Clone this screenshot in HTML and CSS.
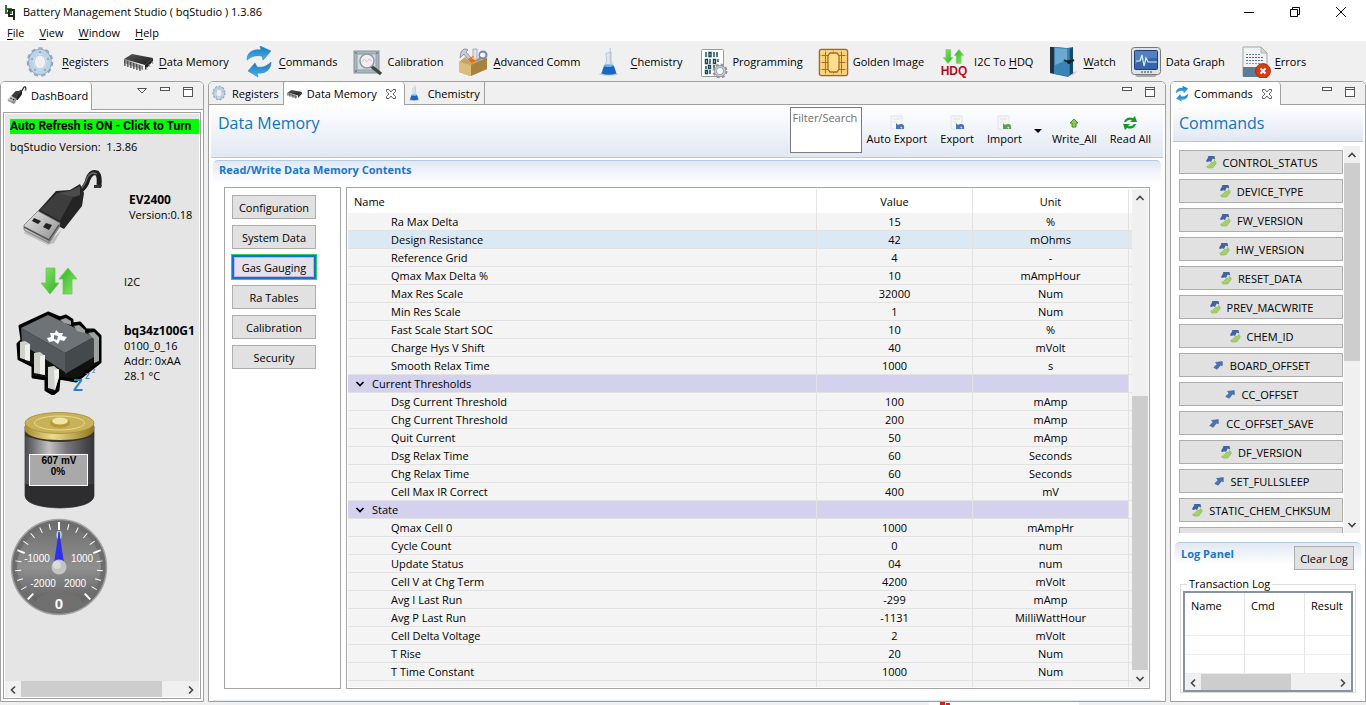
FILE: index.html
```html
<!DOCTYPE html>
<html lang="en">
<head>
    <meta charset="UTF-8">
    <meta name="viewport" content="width=device-width, initial-scale=1.0">
    <title>Battery Management Studio ( bqStudio ) 1.3.86</title>
    <link rel="stylesheet" href="styles.css">
</head>
<body>

    <!-- Shared icons -->
    <svg class="sprite" aria-hidden="true">
        <defs>
            <linearGradient id="gBlue" x1="0" y1="0" x2="0" y2="1"><stop offset="0" stop-color="#1b75b8"/><stop offset="1" stop-color="#45b4f2"/></linearGradient>
            <linearGradient id="gGreen" x1="0" y1="0" x2="1" y2="1"><stop offset="0" stop-color="#8ee86c"/><stop offset="1" stop-color="#2fae22"/></linearGradient>
            <linearGradient id="gBlack" x1="0" y1="0" x2="1" y2="1"><stop offset="0" stop-color="#5a5a5a"/><stop offset="1" stop-color="#1a1a1a"/></linearGradient>
            <linearGradient id="gMetal" x1="0" y1="0" x2="1" y2="1"><stop offset="0" stop-color="#e8e8e8"/><stop offset="1" stop-color="#8a8a8a"/></linearGradient>
        </defs>
        <symbol id="gear" viewBox="0 0 32 32">
            <ellipse cx="14" cy="16" rx="11" ry="12.500" fill="none" stroke="#93a9bd" stroke-width="4.500" stroke-dasharray="3.800 2.900"/>
            <ellipse cx="14" cy="16" rx="8.500" ry="10" fill="none" stroke="#8ba4bc" stroke-width="6.500"/>
            <ellipse cx="14" cy="16" rx="8.500" ry="10" fill="none" stroke="#bcd2e6" stroke-width="5"/>
            <ellipse cx="14" cy="16" rx="6" ry="7.500" fill="none" stroke="#dbe8f3" stroke-width="1"/>
            <g fill="#8ba4bc"><circle cx="14" cy="6" r="1"/><circle cx="22" cy="13" r="1"/><circle cx="6" cy="13" r="1"/><circle cx="9" cy="24" r="1"/><circle cx="19" cy="24" r="1"/></g>
        </symbol>
        <symbol id="chip" viewBox="0 0 32 32">
            <path d="M1 13L20 20V24L1 17Z" fill="#777"/>
            <path d="M2 14v6M5 15v6M8 16v6M11 17v6M14 18v6M17 19v6" stroke="#444" stroke-width="1.500"/>
            <path d="M3 14v6M6 15v6M9 16v6M12 17v6M15 18v6M18 19v6" stroke="#ccc" stroke-width="0.800"/>
            <path d="M9 8L30 12L22 19L1 13Z" fill="url(#gBlack)"/>
            <path d="M30 12V15L22 24V19Z" fill="#222"/>
            <path d="M23 21l1 3M26 18l1 3M29 15l1 3" stroke="#999" stroke-width="1"/>
        </symbol>
        <symbol id="sync" viewBox="0 0 32 32">
            <path d="M4 14C4 6 10 3 18 4L17 0L28 5L20 14L19 10C13 9 9 10 4 14Z" fill="url(#gBlue)" stroke="#2a83c0" stroke-width="0.600"/>
            <path d="M28 16C28 24 22 28 14 27L15 31L5 25L12 17L14 21C20 22 24 20 28 16Z" fill="url(#gBlue)" stroke="#2a83c0" stroke-width="0.600"/>
        </symbol>
        <symbol id="flask" viewBox="0 0 32 32">
            <ellipse cx="12" cy="30" rx="11" ry="1.500" fill="#c3cdd8"/>
            <path d="M9 6L15 5V15L21 29Q12 32 4 29L10 15Z" fill="#dfe8f0" stroke="#9fb0c0" stroke-width="0.700"/>
            <path d="M7 20Q12 22 18 20L21 29Q12 32 4 29Z" fill="#1767c8"/>
            <ellipse cx="12" cy="20" rx="5.500" ry="1.500" fill="#6bb4f0"/>
            <path d="M14 0V20" stroke="#b5bec8" stroke-width="1"/>
        </symbol>
        <symbol id="usb" viewBox="0 0 84 80">
            <path d="M8 60L32 72L42 62L34 76L28 78L4 66Z" fill="#bdbdbd"/>
            <path d="M60 24Q66 20 68 12Q71 4 77 6Q80 9 79 18" fill="none" stroke="#1e1e1e" stroke-width="5"/>
            <path d="M60 23Q65 18 67 11Q71 4 77 7" fill="none" stroke="#666" stroke-width="1.500"/>
            <path d="M74 18h8l-1 3h-7Z" fill="#333"/>
            <path d="M18 44L36 24L50 23L60 17L64 26L62 39L44 62L40 60Z" fill="#242424"/>
            <path d="M20 43L37 26L54 28L40 54Z" fill="#3d3d3d"/>
            <path d="M37 26L50 24L60 19L60 28L54 30Z" fill="#4b4b4b"/>
            <path d="M18 44L40 56L39 61L29 76L4 63L4 58Z" fill="url(#gMetal)" stroke="#777" stroke-width="0.800"/>
            <path d="M4 60L29 73L39 58" fill="none" stroke="#555" stroke-width="1.500"/>
            <path d="M14 51l7 3l-3 3l-6-3ZM26 56l6 2l-3 5l-6-3Z" fill="#222"/>
        </symbol>
        <symbol id="downarrow" viewBox="0 0 18 28"><path d="M5 1H14V16H18L9 27L0 16H5Z" fill="url(#gGreen)" stroke="#6cc957" stroke-width="0.800"/></symbol>
        <symbol id="min" viewBox="0 0 12 12"><rect x="1.500" y="1.500" width="9" height="3" fill="#fff" stroke="#555"/></symbol>
        <symbol id="max" viewBox="0 0 12 12"><rect x="1.500" y="1.500" width="9" height="9" fill="#fff" stroke="#555"/><path d="M1 3.500H11" stroke="#555"/></symbol>
        <symbol id="close" viewBox="0 0 12 12"><path d="M1.500 1.500H4L6 4L8 1.500H10.500V3.500L8 6L10.500 8.500V10.500H8L6 8L4 10.500H1.500V8.500L4 6L1.500 3.500Z" fill="#fff" stroke="#666"/></symbol>
        <symbol id="chev" viewBox="0 0 10 10"><path d="M1.500 3L5 6.500L8.500 3" fill="none" stroke="currentColor" stroke-width="1.600"/></symbol>
        <symbol id="rw" viewBox="0 0 14 16">
            <path d="M1 7L4 2L3 1H11L12 5L9 4L7 8L5 7L3 8Z" fill="#41639f"/>
            <path d="M5 11L8 8L10 9L11 6L13 8V10L9 15H3L2 13L4 12Z" fill="#a5cf6b" stroke="#83b04c" stroke-width="0.600"/>
        </symbol>
        <symbol id="wr" viewBox="0 0 14 16"><path d="M2 11L6 7L4 5L12 4L12 9L10 8L6 13Z" fill="#4a72b8" stroke="#31558f" stroke-width="0.600"/></symbol>
        <symbol id="doc" viewBox="0 0 16 16"><path d="M2 1H13V14H2Z" fill="#f4f6f8" stroke="#e1e5ea"/><path d="M4 4H11M4 7H8" stroke="#e9e1d0"/><path d="M7 8V14H13L11 12Q14 11 13 14H15Q16 9 12 9Q10 9 9 10Z" fill="currentColor"/></symbol>
    </svg>

    <!-- Title bar -->
    <header class="titlebar">
        <svg class="logo" viewBox="0 0 14 18"><path d="M3 2V10H8V6H3" fill="none" stroke="#3d6b3a" stroke-width="2"/><path d="M11 17V7H6V13H11" fill="none" stroke="#1c2a1c" stroke-width="2"/></svg>
        <span class="title">Battery Management Studio ( bqStudio ) 1.3.86</span>
        <button class="win" aria-label="Minimize"><svg viewBox="0 0 12 12"><path d="M1 6.500H11" stroke="#000"/></svg></button>
        <button class="win" aria-label="Restore"><svg viewBox="0 0 12 12"><path d="M1.500 3.500H8.500V10.500H1.500ZM3.500 3V1.500H10.500V8.500H9" fill="none" stroke="#000"/></svg></button>
        <button class="win" aria-label="Close"><svg viewBox="0 0 12 12"><path d="M1 1L11 11M11 1L1 11" stroke="#000"/></svg></button>
    </header>

    <nav class="menubar">
        <a href="#"><u>F</u>ile</a>
        <a href="#"><u>V</u>iew</a>
        <a href="#"><u>W</u>indow</a>
        <a href="#"><u>H</u>elp</a>
    </nav>

    <!-- Main toolbar -->
    <div class="toolbar">
        <button class="tool"><svg><use href="#gear"/></svg><span><u>R</u>egisters</span></button>
        <button class="tool"><svg><use href="#chip"/></svg><span><u>D</u>ata Memory</span></button>
        <button class="tool"><svg><use href="#sync"/></svg><span><u>C</u>ommands</span></button>
        <button class="tool">
            <svg viewBox="0 0 32 32">
                <rect x="3" y="5" width="25" height="22" fill="#a9b6bd" stroke="#85929a"/>
                <rect x="6" y="8" width="19" height="16" fill="#d3dde2" stroke="#8f9ca3"/>
                <g fill="#6d7a80"><circle cx="5" cy="7" r="1"/><circle cx="26" cy="7" r="1"/><circle cx="5" cy="25" r="1"/></g>
                <path d="M20 20L30 28" stroke="#444" stroke-width="3.500"/>
                <circle cx="16" cy="15" r="7" fill="#f3eef2" stroke="#8c9aa4" stroke-width="1.500"/>
                <path d="M11 16l2-3l3 3l2-3l3 2" fill="none" stroke="#e2b2c0" stroke-width="0.800"/>
            </svg><span>Calibration</span></button>
        <button class="tool">
            <svg viewBox="0 0 32 32">
                <path d="M4 6Q7 1 11 4L9 6L16 14L13 16L7 8L3 12Z" fill="#c9ccd8" stroke="#70758a" stroke-width="0.700"/>
                <path d="M16 3h4v11h-4Z" fill="#dde4ee" stroke="#8791a5" stroke-width="0.700"/>
                <path d="M11 13l5-3l4 5l-5 3Z" fill="#e66a22"/><path d="M14 12l4-1l2 4Z" fill="#ffd83a"/>
                <path d="M17 19L26 9" stroke="#8796b8" stroke-width="3"/><circle cx="26" cy="9" r="3.500" fill="#e3eaf5" stroke="#7785ab" stroke-width="2"/>
                <path d="M2 16L8 11L14 17L30 12V23L13 30L2 26Z" fill="#c9a45c"/>
                <path d="M2 16L14 19V30L2 26Z" fill="#dcbd7d"/><path d="M14 19L30 12V23L14 30Z" fill="#a8813b"/>
                <circle cx="25" cy="9" r="2" fill="#fff"/>
            </svg><span><u>A</u>dvanced Comm</span></button>
        <button class="tool"><svg class="shift"><use href="#flask"/></svg><span><u>C</u>hemistry</span></button>
        <button class="tool">
            <svg viewBox="0 0 32 32">
                <rect x="5.500" y="3.500" width="22" height="27" rx="1" fill="#fff" stroke="#999"/>
                <g fill="none" stroke="#0d4552" stroke-width="1.400"><path d="M10 6v5M13 6.500h2v4h-2ZM18 6v5M21 6v5M9.500 13.500h2v4h-2ZM14 13v5M17.500 13.500h2v4h-2ZM22 13v3M10 20v3M12.500 19.500h2v3h-2ZM18 19v3M9.500 24.500h2v3h-2ZM14 24v4"/></g>
                <circle cx="24" cy="25" r="6" fill="none" stroke="#9296a0" stroke-width="3" stroke-dasharray="2.700 2"/>
                <circle cx="24" cy="25" r="4.500" fill="#fff" stroke="#8e95a6" stroke-width="3"/>
                <circle cx="24" cy="25" r="4.500" fill="none" stroke="#c5cad8" stroke-width="1.600"/>
            </svg><span>Programming</span></button>
        <button class="tool">
            <svg viewBox="0 0 32 32">
                <rect x="2.500" y="3.500" width="28" height="26" rx="2" fill="#fbcf73" stroke="#a7661c" stroke-width="1.500"/>
                <g fill="none" stroke="#a96f22" stroke-width="1"><path d="M3 9.500H30M3 16.500H30M3 23.500H30M8.500 4V29M24.500 4V29M16.500 4V29"/></g>
                <rect x="4" y="5" width="25" height="23" fill="none" stroke="#fde2a0"/>
                <path d="M13 7H20L22 10V23L20 26H13L11 23V10Z" fill="#ffdf8e" stroke="#a76b1e" stroke-width="1.300"/>
            </svg><span>Golden Image</span></button>
        <button class="tool">
            <svg viewBox="0 0 32 32">
                <use href="#downarrow" x="5" y="3" width="10" height="15"/>
                <g transform="rotate(180 21 10.500)"><use href="#downarrow" x="16" y="3" width="10" height="15"/></g>
                <text x="16" y="29" class="hdq" text-anchor="middle">HDQ</text>
            </svg><span>I2C To <u>H</u>DQ</span></button>
        <button class="tool">
            <svg viewBox="0 0 32 32">
                <path d="M24 27L30 25L26 29L20 30Z" fill="#c3c3c3"/>
                <path d="M3 1H7V28L3 27Z" fill="#25313d"/>
                <path d="M7 1L20 2L26 1V27L21 31L7 28Z" fill="#2d6f9f"/>
                <path d="M7 1L22 2.500V30L7 28Z" fill="#3a84b5"/><path d="M8 2L20 3V14L8 19Z" fill="#6ba9cf"/>
                <path d="M23 3L26 1.500V27L23 29Z" fill="#17496f"/>
                <path d="M17 14Q21 17 27 14" fill="none" stroke="#222" stroke-width="2"/><circle cx="22" cy="16" r="2" fill="#1c1c1c"/>
            </svg><span><u>W</u>atch</span></button>
        <button class="tool">
            <svg viewBox="0 0 32 32">
                <path d="M5 29H27L25 31H7Z" fill="#aaa"/>
                <rect x="1.500" y="1.500" width="29" height="27" rx="3" fill="#dfe3e6" stroke="#777"/>
                <rect x="4.500" y="4.500" width="23" height="19" rx="1" fill="#3765ad" stroke="#223e70"/>
                <path d="M5 5H27V12Q14 11 5 18Z" fill="#5580c0"/>
                <path d="M6 15H10L12 9L14 20L16 12L18 16H27" fill="none" stroke="#d5f5f2" stroke-width="1.200"/>
                <path d="M11 26H22" stroke="#6d757c" stroke-width="1.500" stroke-dasharray="2 1"/>
            </svg><span>Data Graph</span></button>
        <button class="tool">
            <svg viewBox="0 0 32 32">
                <path d="M4 1H22L28 7V30H4Z" fill="#f2f2f2" stroke="#a5a5a5"/><path d="M22 1V7H28Z" fill="#d6d6d6" stroke="#a5a5a5" stroke-width="0.700"/>
                <rect x="4" y="21" width="24" height="10" fill="#5d7d96"/>
                <g stroke-dasharray="2 1"><path d="M7 8.500H21" stroke="#667aa8"/><path d="M7 11.500H24" stroke="#b0434a"/><path d="M7 14.500H24" stroke="#5a6fa0"/><path d="M7 17.500H22" stroke="#8490b4"/></g>
                <circle cx="24" cy="25" r="7.500" fill="#d83b12" stroke="#9e2a0c" stroke-width="0.800"/>
                <path d="M21.500 22.500L26.500 27.500M26.500 22.500L21.500 27.500" stroke="#fff" stroke-width="2"/>
            </svg><span><u>E</u>rrors</span></button>
    </div>

    <main class="workbench">

        <!-- Dashboard -->
        <section class="panel dashboard">
            <div class="tabs tall">
                <button class="tab active"><svg class="icon20"><use href="#usb"/></svg>DashBoard</button>
                <div class="controls">
                    <button aria-label="View menu"><svg viewBox="0 0 12 12"><path d="M1.500 2.500H10.500L6 7Z" fill="#fff" stroke="#555"/></svg></button>
                    <button aria-label="Minimize"><svg><use href="#min"/></svg></button>
                    <button aria-label="Maximize"><svg><use href="#max"/></svg></button>
                </div>
            </div>
            <div class="dash-frame">
                <div class="dash-body">
                    <button class="refresh">Auto Refresh is ON - Click to Turn</button>
                    <p class="version">bqStudio Version:&nbsp; 1.3.86</p>
                    <div class="device adapter">
                        <svg class="art" viewBox="0 0 84 80"><use href="#usb" width="84" height="80"/></svg>
                        <p><b>EV2400</b><br>Version:0.18</p>
                    </div>
                    <div class="device bus">
                        <svg class="art" viewBox="0 0 84 28">
                            <use href="#downarrow" x="23" y="0" width="18" height="28"/>
                            <g transform="rotate(180 50 14)"><use href="#downarrow" x="41" y="0" width="18" height="28"/></g>
                        </svg>
                        <p>I2C</p>
                    </div>
                    <div class="device gauge-ic">
                        <svg class="art" viewBox="0 0 88 84">
                            <path d="M4 15L32 2L44 7L50 5L56 9V13L64 12L70 19L78 19L84 25V51L60 70L43 67L42 79L37 83L30 79V68L17 66V55L3 48L2 33L6 29Z" fill="#111" stroke="#000" stroke-width="3" stroke-linejoin="round"/>
                            <path d="M5 17L32 4L78 26L49 42Z" fill="#6d7377"/>
                            <path d="M5 17L49 42V61L6 33Z" fill="#54595d"/>
                            <path d="M49 42L78 26V46L49 63Z" fill="#44494c"/>
                            <path d="M44 9l6-2l5 3v4l-7-2ZM58 15l5-1l6 5v3l-8-2ZM72 22l6-1l5 5v24l-5 2V28Z" fill="#9da19f"/>
                            <path d="M4 31L9 30L14 33V50L4 47ZM18 42L24 41L29 45V64L18 62ZM32 56L38 55L43 59V66L39 79L32 77Z" fill="#cfd1cb"/>
                            <path d="M9 34L14 33V50L9 49ZM24 45L29 44V64L24 63ZM38 59L43 58V66L39 79Z" fill="#f0f0ea"/>
                            <path d="M34 22H39L40 19L43 22H47L46 25L51 26L48 30L44 29L42 33L38 30L33 31L31 27L35 26Z" fill="#fff"/>
                            <path d="M38 24l4 1l-1 4l-3-1Z" fill="#777"/>
                            <g class="zzz"><text x="57" y="80" class="z1">Z</text><text x="69" y="68" class="z2">z</text><text x="76" y="62" class="z3">z</text></g>
                        </svg>
                        <p><b>bq34z100G1</b><br>0100_0_16<br>Addr: 0xAA<br>28.1 °C</p>
                    </div>
                    <svg class="battery" viewBox="0 0 74 100">
                        <defs>
                            <linearGradient id="bBody"><stop offset="0" stop-color="#4a4a4e"/><stop offset="0.35" stop-color="#c2c2c6"/><stop offset="0.6" stop-color="#77777c"/><stop offset="1" stop-color="#343438"/></linearGradient>
                            <linearGradient id="bTop"><stop offset="0" stop-color="#a68b32"/><stop offset="0.4" stop-color="#eddd8f"/><stop offset="1" stop-color="#927620"/></linearGradient>
                        </defs>
                        <path d="M2 16V86Q4 97 37 98Q69 97 71 86V16Z" fill="url(#bBody)" stroke="#444" stroke-width="0.800"/>
                        <path d="M2 74Q36 78 71 74V86Q69 97 37 98Q4 97 2 86Z" fill="#2d2c2e"/>
                        <path d="M2 20Q37 36 71 20V26Q37 38 2 26Z" fill="#3a3524"/>
                        <path d="M2 13V21Q8 30 37 30Q66 30 71 21V13Z" fill="url(#bTop)"/>
                        <ellipse cx="36.500" cy="13" rx="34.500" ry="10.500" fill="#c8b257" stroke="#a48c3c" stroke-width="0.800"/>
                        <ellipse cx="36.500" cy="13" rx="25" ry="7" fill="none" stroke="#ead992"/>
                        <ellipse cx="37" cy="13" rx="10" ry="5" fill="#b39a3e"/><ellipse cx="37" cy="11" rx="8" ry="3.500" fill="#f1e4a4"/>
                        <rect x="6.500" y="44.500" width="58" height="31" fill="#a9a9a9" stroke="#fff"/>
                        <text x="36" y="54" text-anchor="middle">607 mV</text>
                        <text x="35" y="65" text-anchor="middle">0%</text>
                    </svg>
                    <svg class="dial" viewBox="0 0 98 98">
                        <defs><linearGradient id="dFace" x1="0" y1="0" x2="0" y2="1"><stop offset="0" stop-color="#6f6f6f"/><stop offset="0.5" stop-color="#8f8f8f"/><stop offset="1" stop-color="#5a5a5a"/></linearGradient></defs>
                        <circle cx="49" cy="49" r="47.500" fill="#6d6d6d" stroke="#a0a0a0" stroke-width="1.500"/>
                        <circle cx="49" cy="49" r="42" fill="url(#dFace)"/>
                        <ellipse cx="49" cy="84" rx="23" ry="10" fill="#707070"/>
                        <g stroke="#fff" stroke-width="1">
                            <path id="tick" d="M49 5V11"/>
                            <use href="#tick" transform="rotate(13 49 49)"/><use href="#tick" transform="rotate(26 49 49)"/><use href="#tick" transform="rotate(40 49 49)"/><use href="#tick" transform="rotate(54 49 49)"/>
                            <use href="#tick" transform="rotate(82 49 49)"/><use href="#tick" transform="rotate(95 49 49)"/><use href="#tick" transform="rotate(108 49 49)"/><use href="#tick" transform="rotate(121 49 49)"/>
                            <use href="#tick" transform="rotate(-13 49 49)"/><use href="#tick" transform="rotate(-26 49 49)"/><use href="#tick" transform="rotate(-40 49 49)"/><use href="#tick" transform="rotate(-54 49 49)"/>
                            <use href="#tick" transform="rotate(-82 49 49)"/><use href="#tick" transform="rotate(-95 49 49)"/><use href="#tick" transform="rotate(-108 49 49)"/><use href="#tick" transform="rotate(-121 49 49)"/>
                        </g>
                        <g stroke="#fff" stroke-width="2"><path id="major" d="M49 4V12"/><use href="#major" transform="rotate(68 49 49)"/><use href="#major" transform="rotate(-68 49 49)"/><use href="#major" transform="rotate(136 49 49)"/><use href="#major" transform="rotate(-136 49 49)"/></g>
                        <text x="49" y="21" text-anchor="middle">0</text>
                        <text x="27" y="44" text-anchor="middle">-1000</text><text x="72" y="44" text-anchor="middle">1000</text>
                        <text x="33" y="69" text-anchor="middle">-2000</text><text x="65" y="69" text-anchor="middle">2000</text>
                        <path d="M49 12L54 45H44Z" fill="#2f2ff0"/>
                        <circle cx="49" cy="49" r="7.500" fill="#c4c4c4"/><circle cx="47" cy="47" r="4" fill="#dcdcdc"/>
                        <text x="49" y="91" text-anchor="middle" class="reading">0</text>
                    </svg>
                </div>
                <div class="scroll-x">
                    <button aria-label="Scroll left"><svg class="left"><use href="#chev"/></svg></button>
                    <div class="track"><div class="thumb dash-thumb"></div></div>
                    <button aria-label="Scroll right"><svg class="right"><use href="#chev"/></svg></button>
                </div>
            </div>
        </section>

        <!-- Data memory editor -->
        <section class="panel editor">
            <div class="tabs">
                <button class="tab"><svg class="icon16"><use href="#gear"/></svg>Registers</button>
                <button class="tab active"><svg class="icon16"><use href="#chip"/></svg>Data Memory<svg class="icon12"><use href="#close"/></svg></button>
                <button class="tab"><svg class="icon16"><use href="#flask"/></svg>Chemistry</button>
                <div class="controls">
                    <button aria-label="Minimize"><svg><use href="#min"/></svg></button>
                    <button aria-label="Maximize"><svg><use href="#max"/></svg></button>
                </div>
            </div>
            <div class="form-head">
                <h1>Data Memory</h1>
                <textarea class="filter" aria-label="Filter/Search" placeholder="Filter/Search"></textarea>
                <button class="action"><svg class="blue"><use href="#doc"/></svg>Auto Export</button>
                <button class="action"><svg class="blue"><use href="#doc"/></svg>Export</button>
                <button class="action"><svg class="green"><use href="#doc"/></svg>Import</button>
                <button class="more" aria-label="Import options"><svg viewBox="0 0 8 4"><path d="M0 0H8L4 4Z"/></svg></button>
                <button class="action"><svg viewBox="0 0 16 16"><path d="M8 4L12 8H10V12H6V8H4Z" fill="#8fcb4d" stroke="#4c8a28"/></svg>Write_All</button>
                <button class="action"><svg viewBox="0 0 16 16"><path d="M2 7Q4 1 11 3L13 1L15 7H8L10 5Q6 4 4 7ZM14 9Q12 15 5 13L3 15L1 9H8L6 11Q10 12 12 9Z" fill="#169a28"/></svg>Read All</button>
            </div>
            <div class="form-section">
                <h2>Read/Write Data Memory Contents</h2>
                <div class="content">
                    <div class="categories">
                        <button>Configuration</button>
                        <button>System Data</button>
                        <button class="current">Gas Gauging</button>
                        <button>Ra Tables</button>
                        <button>Calibration</button>
                        <button>Security</button>
                    </div>
                    <div class="grid-box">
                        <div class="grid-view">
                            <table class="memory">
                                <thead><tr><th class="name">Name</th><th>Value</th><th>Unit</th><th class="pad"></th></tr></thead>
                                <tbody>
                                    <tr><td>Ra Max Delta</td><td>15</td><td>%</td><td></td></tr>
                                    <tr class="selected"><td>Design Resistance</td><td>42</td><td>mOhms</td><td></td></tr>
                                    <tr><td>Reference Grid</td><td>4</td><td>-</td><td></td></tr>
                                    <tr><td>Qmax Max Delta %</td><td>10</td><td>mAmpHour</td><td></td></tr>
                                    <tr><td>Max Res Scale</td><td>32000</td><td>Num</td><td></td></tr>
                                    <tr><td>Min Res Scale</td><td>1</td><td>Num</td><td></td></tr>
                                    <tr><td>Fast Scale Start SOC</td><td>10</td><td>%</td><td></td></tr>
                                    <tr><td>Charge Hys V Shift</td><td>40</td><td>mVolt</td><td></td></tr>
                                    <tr><td>Smooth Relax Time</td><td>1000</td><td>s</td><td></td></tr>
                                    <tr class="group"><td><svg><use href="#chev"/></svg>Current Thresholds</td><td></td><td></td><td></td></tr>
                                    <tr><td>Dsg Current Threshold</td><td>100</td><td>mAmp</td><td></td></tr>
                                    <tr><td>Chg Current Threshold</td><td>200</td><td>mAmp</td><td></td></tr>
                                    <tr><td>Quit Current</td><td>50</td><td>mAmp</td><td></td></tr>
                                    <tr><td>Dsg Relax Time</td><td>60</td><td>Seconds</td><td></td></tr>
                                    <tr><td>Chg Relax Time</td><td>60</td><td>Seconds</td><td></td></tr>
                                    <tr><td>Cell Max IR Correct</td><td>400</td><td>mV</td><td></td></tr>
                                    <tr class="group"><td><svg><use href="#chev"/></svg>State</td><td></td><td></td><td></td></tr>
                                    <tr><td>Qmax Cell 0</td><td>1000</td><td>mAmpHr</td><td></td></tr>
                                    <tr><td>Cycle Count</td><td>0</td><td>num</td><td></td></tr>
                                    <tr><td>Update Status</td><td>04</td><td>num</td><td></td></tr>
                                    <tr><td>Cell V at Chg Term</td><td>4200</td><td>mVolt</td><td></td></tr>
                                    <tr><td>Avg I Last Run</td><td>-299</td><td>mAmp</td><td></td></tr>
                                    <tr><td>Avg P Last Run</td><td>-1131</td><td>MilliWattHour</td><td></td></tr>
                                    <tr><td>Cell Delta Voltage</td><td>2</td><td>mVolt</td><td></td></tr>
                                    <tr><td>T Rise</td><td>20</td><td>Num</td><td></td></tr>
                                    <tr><td>T Time Constant</td><td>1000</td><td>Num</td><td></td></tr>
                                    <tr><td></td><td></td><td></td><td></td></tr>
                                </tbody>
                            </table>
                        </div>
                        <div class="scroll-y">
                            <button aria-label="Scroll up"><svg class="up"><use href="#chev"/></svg></button>
                            <div class="track"><div class="thumb memory-thumb"></div></div>
                            <button aria-label="Scroll down"><svg><use href="#chev"/></svg></button>
                        </div>
                    </div>
                </div>
            </div>
        </section>

        <!-- Commands -->
        <section class="panel commands">
            <div class="tabs">
                <button class="tab active"><svg class="icon16"><use href="#sync"/></svg>Commands<svg class="icon12"><use href="#close"/></svg></button>
                <div class="controls">
                    <button aria-label="Minimize"><svg><use href="#min"/></svg></button>
                    <button aria-label="Maximize"><svg><use href="#max"/></svg></button>
                </div>
            </div>
            <div class="form-head short"><h1>Commands</h1></div>
            <div class="command-area">
                <div class="command-list">
                    <button><svg><use href="#rw"/></svg>CONTROL_STATUS</button>
                    <button><svg><use href="#rw"/></svg>DEVICE_TYPE</button>
                    <button><svg><use href="#rw"/></svg>FW_VERSION</button>
                    <button><svg><use href="#rw"/></svg>HW_VERSION</button>
                    <button><svg><use href="#rw"/></svg>RESET_DATA</button>
                    <button><svg><use href="#rw"/></svg>PREV_MACWRITE</button>
                    <button><svg><use href="#rw"/></svg>CHEM_ID</button>
                    <button><svg><use href="#wr"/></svg>BOARD_OFFSET</button>
                    <button><svg><use href="#wr"/></svg>CC_OFFSET</button>
                    <button><svg><use href="#wr"/></svg>CC_OFFSET_SAVE</button>
                    <button><svg><use href="#rw"/></svg>DF_VERSION</button>
                    <button><svg><use href="#wr"/></svg>SET_FULLSLEEP</button>
                    <button><svg><use href="#rw"/></svg>STATIC_CHEM_CHKSUM</button>
                    <button aria-label="Next command"><svg><use href="#rw"/></svg></button>
                </div>
                <div class="scroll-y">
                    <button aria-label="Scroll up"><svg class="up"><use href="#chev"/></svg></button>
                    <div class="track"><div class="thumb command-thumb"></div></div>
                    <button aria-label="Scroll down"><svg><use href="#chev"/></svg></button>
                </div>
            </div>
            <div class="log">
                <div class="log-head">
                    <h2>Log Panel</h2>
                    <button>Clear Log</button>
                </div>
                <fieldset>
                    <legend>Transaction Log</legend>
                    <div class="log-box">
                        <table>
                            <thead><tr><th>Name</th><th>Cmd</th><th class="rest">Result</th></tr></thead>
                            <tbody>
                                <tr><td></td><td></td><td></td></tr>
                                <tr><td></td><td></td><td></td></tr>
                                <tr><td></td><td></td><td></td></tr>
                            </tbody>
                        </table>
                        <div class="scroll-x">
                            <button aria-label="Scroll left"><svg class="left"><use href="#chev"/></svg></button>
                            <div class="track"><div class="thumb log-thumb"></div></div>
                            <button aria-label="Scroll right"><svg class="right"><use href="#chev"/></svg></button>
                        </div>
                    </div>
                </fieldset>
            </div>
        </section>
    </main>

    <footer class="strip"><div class="progress"><svg viewBox="0 0 24 3"><path d="M11 0H16V3H11ZM17 1H21V3H17Z" fill="#e01b1b"/></svg></div></footer>
</body>
</html>
```
FILE: styles.css
```css
* {
    box-sizing: border-box;
}

body {
    display: flex;
    flex-direction: column;
    height: 100vh;
    margin: 0;
    overflow: hidden;
    background-color: #f0f0f0;
    color: #000;
    font: 11px/15px "Open Sans", "Noto Sans", sans-serif;
}

button {
    padding: 0;
    border: none;
    background: none;
    color: inherit;
    font: inherit;
    white-space: nowrap;
}

h1, h2, p {
    margin: 0;
}

u {
    text-underline-offset: 2px;
}

svg {
    display: block;
    flex: none;
}

.sprite {
    position: absolute;
    width: 0;
    height: 0;
}

/* Title bar and menu */
.titlebar {
    display: flex;
    align-items: center;
    height: 23px;
    padding: 0 7px 0 3px;
    background-color: #fff;
}

.logo {
    width: 14px;
    height: 18px;
}

.title {
    flex: 1;
    margin-left: 6px;
}

.win {
    display: flex;
    justify-content: center;
    width: 36px;
    margin-left: 10px;
}

.win svg {
    width: 12px;
    height: 12px;
}

.menubar {
    display: flex;
    gap: 15px;
    height: 18px;
    padding: 2px 7px 0;
    background-color: #fff;
}

.menubar a {
    color: #000;
    text-decoration: none;
}

/* Toolbar */
.toolbar {
    display: flex;
    gap: 14px;
    height: 40px;
    padding: 1px 26px 0;
}

.tool {
    display: flex;
    align-items: center;
    gap: 4px;
}

.tool svg {
    width: 32px;
    height: 32px;
}

.tool .shift {
    padding-left: 4px;
}

.hdq {
    fill: #b01020;
    font: bold 12px "Liberation Sans", sans-serif;
}

/* Panels */
.workbench {
    display: flex;
    flex: 1;
    gap: 4px;
    min-height: 0;
}

.panel {
    display: flex;
    flex-direction: column;
    min-width: 0;
    border: 1px solid #a0a0a0;
    border-radius: 5px 5px 0 0;
    background-color: #fff;
}

.dashboard {
    width: 204px;
}

.editor {
    flex: 1;
}

.commands {
    width: 196px;
}

.tabs {
    display: flex;
    flex: none;
    height: 23px;
    border-bottom: 1px solid #a0a0a0;
    border-radius: 4px 4px 0 0;
    background-color: #f0f0f0;
}

.tabs.tall {
    height: 28px;
}

.tab {
    display: flex;
    align-items: center;
    gap: 4px;
    padding: 0 4px 0 3px;
    border-right: 1px solid #a0a0a0;
}

.tab.active {
    margin-bottom: -1px;
    padding-right: 7px;
    border-radius: 4px 4px 0 0;
    background-color: #fff;
}

.tabs.tall .active {
    padding: 0 3px 2px 6px;
}

.icon20 {
    width: 20px;
    height: 20px;
}

.icon16 {
    width: 16px;
    height: 16px;
}

.icon12 {
    width: 12px;
    height: 12px;
    margin-left: 4px;
}

.controls {
    display: flex;
    gap: 11px;
    margin-left: auto;
    padding: 4px 9px 0;
}

.controls button {
    align-self: flex-start;
}

.controls svg {
    width: 12px;
    height: 12px;
}

/* Dashboard */
.dash-frame {
    display: flex;
    flex: 1;
    flex-direction: column;
    min-height: 0;
    margin: 2px;
    padding: 1px;
    border: 1px solid #a0a0a0;
}

.dash-body {
    flex: 1;
    min-height: 0;
    padding: 5px 0 0 5px;
    overflow: hidden;
    background-color: #e5e5e5;
}

.refresh {
    display: block;
    width: 100%;
    overflow: hidden;
    background-color: #00ff00;
    font: bold 12px/15px Roboto, Arial, sans-serif;
    text-align: left;
}

.version {
    margin-top: 5px;
}

.device {
    display: flex;
    align-items: center;
}

.device b {
    font-size: 12px;
}

.device .art {
    width: 88px;
    margin: 0 20px 0 6px;
}

.adapter {
    height: 106px;
}

.adapter .art {
    width: 84px;
    height: 80px;
    margin: 0 25px 0 10px;
}

.bus {
    height: 42px;
}

.bus .art {
    height: 28px;
}

.gauge-ic {
    height: 102px;
}

.gauge-ic .art {
    height: 84px;
}

.zzz text {
    fill: #2a7fc9;
    font-family: "Liberation Sans", sans-serif;
}

.zzz .z1 {
    font-size: 16px;
    font-weight: bold;
}

.zzz .z2 {
    font-size: 10px;
}

.zzz .z3 {
    font-size: 7px;
}

.battery {
    width: 74px;
    height: 100px;
    margin: 6px 0 0 13px;
}

.battery text {
    font: bold 10px "Liberation Sans", sans-serif;
}

.dial {
    width: 98px;
    height: 98px;
    margin-top: 8px;
}

.dial text {
    fill: #fff;
    font: 10px "Liberation Sans", sans-serif;
}

.dial .reading {
    font-size: 15px;
    font-weight: bold;
}

/* Scroll bars */
.scroll-x, .scroll-y {
    display: flex;
    flex: none;
    background-color: #f0f0f0;
    color: #444;
}

.scroll-x {
    height: 16px;
}

.scroll-y {
    flex-direction: column;
    width: 16px;
}

.scroll-x button, .scroll-y button {
    display: flex;
    flex: none;
    align-items: center;
    justify-content: center;
    width: 16px;
    height: 17px;
}

.scroll-x svg, .scroll-y svg {
    width: 10px;
    height: 10px;
}

.up {
    transform: rotate(180deg);
}

.left {
    transform: rotate(90deg);
}

.right {
    transform: rotate(-90deg);
}

.track {
    flex: 1;
    min-height: 0;
}

.thumb {
    background-color: #cdcdcd;
}

.scroll-x .thumb {
    height: 100%;
}

.dash-thumb {
    width: 87%;
}

.memory-thumb {
    height: 59%;
    margin-top: 190px;
}

.command-thumb {
    height: 56%;
}

.log-thumb {
    width: 67%;
}

/* Form header */
.form-head {
    display: flex;
    flex: none;
    height: 53px;
    margin: 0 2px;
    padding: 2px 12px 2px 7px;
    border-bottom: 1px solid #b5cbe2;
    background: linear-gradient(#fff, #e1e8f3);
}

.form-head.short {
    height: 37px;
    padding-left: 6px;
}

h1 {
    flex: 1;
    padding-top: 5px;
    color: #0f73c0;
    font-size: 16px;
    font-weight: 400;
    line-height: 22px;
}

h2 {
    color: #1877cc;
    font-size: 11px;
    line-height: 15px;
}

.filter {
    width: 72px;
    height: 46px;
    margin-right: 5px;
    padding: 2px;
    border: 1px solid #7a7a7a;
    background-color: #fff;
    font: inherit;
    resize: none;
    overflow: hidden;
}

.filter::placeholder {
    color: #6d6d6d;
}

.action {
    display: flex;
    flex-direction: column;
    align-items: center;
    margin-left: 13px;
    padding-top: 8px;
}

.filter + .action {
    margin-left: 0;
}

.action svg {
    width: 16px;
    height: 16px;
}

.blue {
    color: #4b72b0;
}

.green {
    color: #5a9e5a;
}

.more {
    margin: 0 -3px 0 12px;
}

.more svg {
    width: 8px;
    height: 4px;
}

/* Memory section */
.form-section {
    display: flex;
    flex: 1;
    flex-direction: column;
    min-height: 0;
    margin: 2px 4px 0;
    padding: 1px 10px 11px;
    border: 1px solid transparent;
    border-top-color: #b5cbe2;
    border-radius: 5px 5px 0 0;
    background: linear-gradient(#e1e8f3, #fff 22px);
}

.form-section h2 {
    margin-left: -5px;
}

.content {
    display: flex;
    flex: 1;
    gap: 5px;
    min-height: 0;
    margin-top: 10px;
}

.categories {
    display: flex;
    flex: none;
    flex-direction: column;
    gap: 6px;
    width: 117px;
    padding: 7px;
    border: 1px solid #a5a5a5;
    background-color: #fff;
}

.categories button {
    width: 84px;
    height: 24px;
}

.categories button, .command-list button, .log-head button {
    border: 1px solid #adadad;
    background-color: #e1e1e1;
}

.categories .current {
    border: 2px solid #1274c4;
    background-color: #e6e0ec;
    outline: 1px solid #32d060;
    box-shadow: inset 0 0 0 1px #c3b1ea;
}

.grid-box {
    display: flex;
    flex: 1;
    min-width: 0;
    padding: 1px;
    border: 1px solid #a5a5a5;
    background-color: #fff;
}

.grid-view {
    flex: 1;
    min-width: 0;
    overflow: hidden;
}

table {
    width: 100%;
    border-spacing: 0;
    table-layout: fixed;
}

th {
    font-weight: 400;
}

.memory th {
    width: 156px;
    height: 24px;
    padding: 0;
    border-right: 1px solid #e5e5e5;
}

.memory .name {
    width: auto;
    padding: 0 6px;
    text-align: left;
}

.memory .pad {
    width: 3px;
    border-right: none;
}

.memory td {
    height: 18px;
    padding: 0;
    border-right: 1px solid #e2e2e2;
    border-bottom: 1px solid #e2e2e2;
    background-color: #f4f4f4;
    line-height: 17px;
    text-align: center;
}

.memory td:first-child {
    padding-left: 43px;
    text-align: left;
}

.memory td:last-child {
    border-right: none;
}

.memory .selected td {
    background-color: #dbe9f5;
}

.memory .group td {
    background-color: #d3d1ee;
}

.memory .group td:first-child {
    padding-left: 7px;
}

.memory .group svg {
    display: inline-block;
    width: 10px;
    height: 10px;
    margin-right: 7px;
    vertical-align: -1px;
}

.memory .group td:last-child {
    background-color: #f4f4f4;
}

/* Commands */
.command-area {
    display: flex;
    flex: 1;
    min-height: 0;
    margin: 4px 5px 0 8px;
}

.command-list {
    display: flex;
    flex: 1;
    flex-direction: column;
    gap: 5px;
    padding: 4px 1px 0 0;
    overflow: hidden;
}

.command-list button {
    display: flex;
    flex: none;
    align-items: center;
    justify-content: center;
    gap: 6px;
    height: 24px;
}

.command-list svg {
    width: 12px;
    height: 14px;
}

.log {
    flex: none;
    margin: 9px 4px 8px;
    padding: 3px 5px 0;
    border-top: 1px solid #b5cbe2;
    border-radius: 5px 5px 0 0;
    background: linear-gradient(#e1e8f3, #fff 22px);
}

.log-head {
    display: flex;
    justify-content: space-between;
    margin: 0 2px 7px 1px;
}

.log-head button {
    width: 60px;
    height: 24px;
}

fieldset {
    min-width: 0;
    margin: 0;
    padding: 0 2px;
    border: 1px solid #dcdcdc;
}

legend {
    margin-left: 4px;
    padding: 0 2px;
    line-height: 14px;
}

.log-box {
    border: 2px solid #8793a0;
}

.log-box th {
    width: 60px;
    height: 24px;
    padding: 0 6px;
    border-right: 1px solid #e5e5e5;
    text-align: left;
}

.log-box .rest {
    width: auto;
}

.log-box th:last-child, .log-box td:last-child {
    border-right: none;
}

.log-box td {
    height: 19px;
    padding: 0;
    border-right: 1px solid #e5e5e5;
    border-bottom: 1px solid #ececec;
}

/* Bottom strip */
.strip {
    flex: none;
    height: 3px;
}

.progress {
    width: 150px;
    height: 3px;
    margin-left: 68%;
    background-color: #fff;
}

.progress svg {
    width: 24px;
    height: 3px;
}
```
